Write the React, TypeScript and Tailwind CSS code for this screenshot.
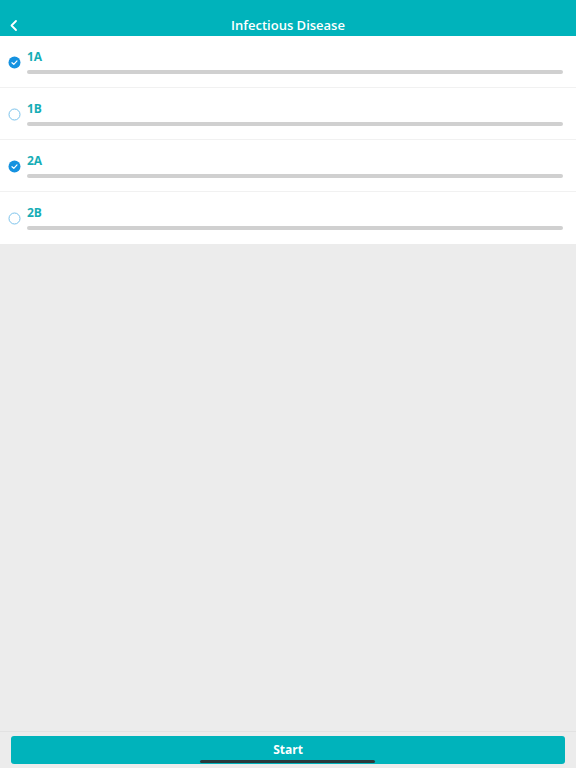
import React from "react";

const items = [
  { id: "1A", checked: true },
  { id: "1B", checked: false },
  { id: "2A", checked: true },
  { id: "2B", checked: false },
];

function Check({ checked }: { checked: boolean }) {
  if (checked) {
    return (
      <svg width="13" height="13" viewBox="0 0 13 13" className="shrink-0">
        <circle cx="6.5" cy="6.5" r="6" fill="#1592e0" />
        <path d="M4 6.7 L5.8 8.4 L9 4.9" fill="none" stroke="#fff" strokeWidth="1.2" strokeLinecap="round" strokeLinejoin="round" />
      </svg>
    );
  }
  return (
    <svg width="13" height="13" viewBox="0 0 13 13" className="shrink-0">
      <circle cx="6.5" cy="6.5" r="5.5" fill="none" stroke="#7cc3ec" strokeWidth="1" />
    </svg>
  );
}

export default function App() {
  return (
    <div
      className="flex h-[768px] w-[576px] flex-col bg-[#ececec]"
      style={{ fontFamily: '"Open Sans", "Noto Sans", sans-serif' }}
    >
      <header className="relative flex h-[36px] shrink-0 items-center justify-center bg-[#00b3bb] pt-[15px]">
        <button className="absolute left-[9px] top-[19px] text-white" aria-label="back">
          <svg width="10" height="14" viewBox="0 0 10 14">
            <path d="M7 2 L2.5 6.5 L7 11" fill="none" stroke="#fff" strokeWidth="1.8" strokeLinecap="round" strokeLinejoin="round" />
          </svg>
        </button>
        <h1 className="text-[13px] font-semibold text-white">Infectious Disease</h1>
      </header>

      <ul className="bg-white">
        {items.map((it, i) => (
          <li
            key={it.id}
            className={`flex h-[52px] items-center gap-[6px] pl-[8px] pr-[13px] ${i < items.length - 1 ? "border-b border-[#f1f1f1]" : ""}`}
          >
            <div className="mt-[1px]">
              <Check checked={it.checked} />
            </div>
            <div className="flex flex-1 flex-col">
              <span className="mt-[-1px] text-[12px] font-bold leading-[16px] text-[#16adb6]">{it.id}</span>
              <div className="mt-[5px] h-[4px] w-full rounded-full bg-[#d0d0d0]" />
            </div>
          </li>
        ))}
      </ul>

      <div className="flex-1" />

      <div className="relative shrink-0 border-t border-[#e2e2e2] px-[11px] pb-[4px] pt-[4px]">
        <button className="flex h-[28px] w-full items-center justify-center rounded-[3px] bg-[#00b3bb] text-[12px] font-bold text-white">
          Start
        </button>
        <div className="absolute bottom-[5px] left-[200px] h-[3px] w-[175px] rounded-full bg-[#2a3a3c]" />
      </div>
    </div>
  );
}
